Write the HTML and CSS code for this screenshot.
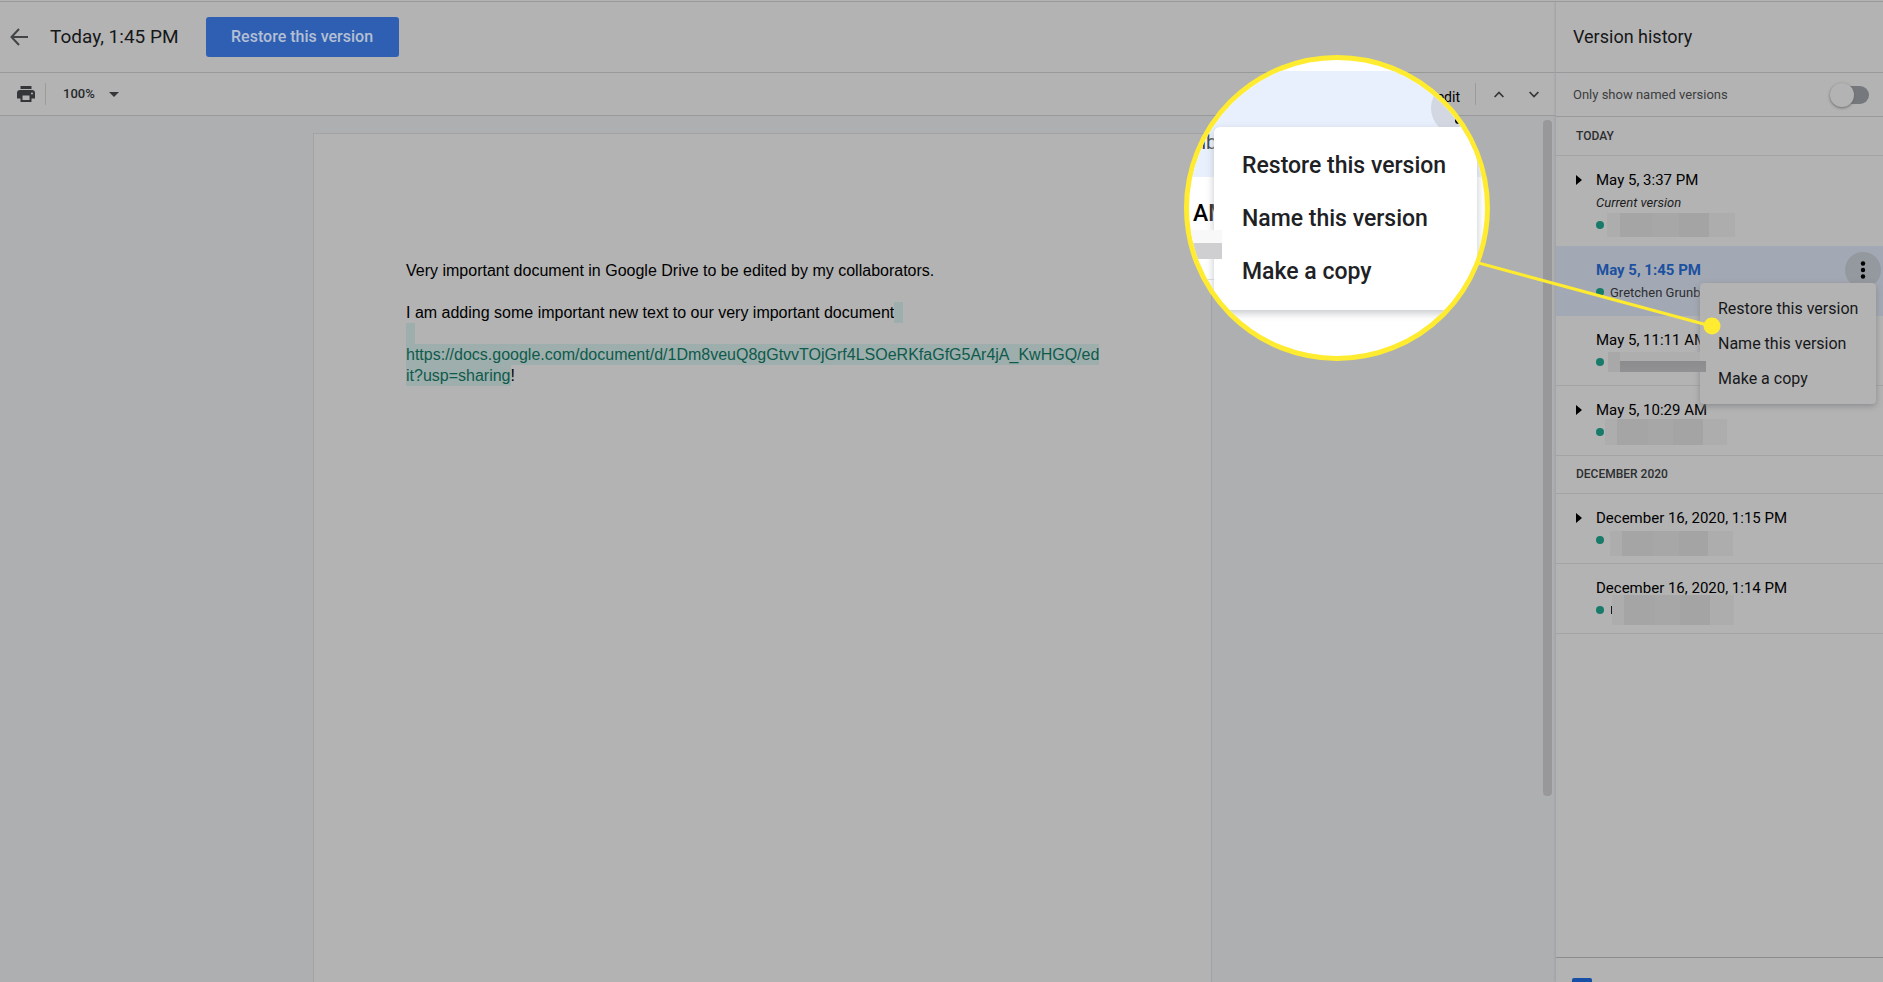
FILE: index.html
```html
<!DOCTYPE html>
<html lang="en">
<head>
<meta charset="utf-8">
<title>Version history</title>
<link rel="stylesheet" href="styles.css">
</head>
<body>
<div class="app">
  <main class="editor">
    <header class="topbar">
      <button class="icon-button back" aria-label="Back">
        <svg width="18" height="18" viewBox="0 0 18 18" fill="none" stroke="currentColor" stroke-width="2"><path d="M18 9H2M9 1L1.500 9L9 17"/></svg>
      </button>
      <h1 class="title">Today, 1:45 PM</h1>
      <button class="restore">Restore this version</button>
    </header>
    <div class="toolbar">
      <button class="icon-button print" aria-label="Print">
        <svg width="18" height="16" viewBox="0 0 18 16"><path fill="currentColor" fill-rule="evenodd" d="M3.500 0h11v3h-11zM3 4h12a3 3 0 0 1 3 3v5.500h-3.500V16h-11v-3.500H0V7a3 3 0 0 1 3-3zM5.500 9.500V14h7V9.500zM15 6.500a1 1 0 1 0 0 2a1 1 0 0 0 0-2z"/></svg>
      </button>
      <label class="zoom">
        <select aria-label="Zoom"><option>100%</option></select>
        <svg width="10" height="5" viewBox="0 0 10 5"><path fill="currentColor" d="M0 0h10L5 5z"/></svg>
      </label>
      <span class="edits">Total: 1 edit</span>
      <div class="steps">
        <button class="icon-button" aria-label="Previous edit"><svg width="10" height="7" viewBox="0 0 10 7" fill="none" stroke="currentColor" stroke-width="1.700"><path d="M.6 6L5 1.500L9.400 6"/></svg></button>
        <button class="icon-button" aria-label="Next edit"><svg width="10" height="7" viewBox="0 0 10 7" fill="none" stroke="currentColor" stroke-width="1.700"><path d="M.6 1L5 5.500L9.400 1"/></svg></button>
      </div>
    </div>
    <div class="canvas">
      <article class="paper">
        <p>Very important document in Google Drive to be edited by my collaborators.</p>
        <p>I am adding some important new text to our very important document<span class="added">&nbsp;&nbsp;</span><br><span class="added">&nbsp;&nbsp;</span><br><a class="added" href="#doc">https://docs.google.com/document/d/1Dm8veuQ8gGtvvTOjGrf4LSOeRKfaGfG5Ar4jA_KwHGQ/ed<br>it?usp=sharing</a>!</p>
      </article>
      <div class="scrollbar"></div>
    </div>
  </main>

  <aside class="history">
    <h2 class="history-title">Version history</h2>
    <div class="filter">
      <label for="named">Only show named versions</label>
      <input class="switch" id="named" type="checkbox">
    </div>
    <h3 class="group">TODAY</h3>
    <section class="version first">
      <button class="expand" aria-label="Expand"></button>
      <div class="date">May 5, 3:37 PM</div>
      <div class="current">Current version</div>
      <div class="author"><i class="dot"></i><span class="mask m1"></span></div>
    </section>
    <section class="version selected">
      <div class="date">May 5, 1:45 PM</div>
      <div class="author"><i class="dot"></i><span class="name">Gretchen Grunberg</span></div>
      <button class="more" aria-label="More actions"><svg width="6" height="18" viewBox="0 0 6 18"><circle cx="3" cy="2.500" r="2.200"/><circle cx="3" cy="9" r="2.200"/><circle cx="3" cy="15.500" r="2.200"/></svg></button>
      <div class="menu">
        <button>Restore this version</button>
        <button>Name this version</button>
        <button>Make a copy</button>
      </div>
    </section>
    <section class="version">
      <div class="date">May 5, 11:11 AM</div>
      <div class="author"><i class="dot"></i><span class="mask m2"></span></div>
    </section>
    <section class="version">
      <button class="expand" aria-label="Expand"></button>
      <div class="date">May 5, 10:29 AM</div>
      <div class="author"><i class="dot"></i><span class="mask m3"></span></div>
    </section>
    <h3 class="group">DECEMBER 2020</h3>
    <section class="version">
      <button class="expand" aria-label="Expand"></button>
      <div class="date">December 16, 2020, 1:15 PM</div>
      <div class="author"><i class="dot"></i><span class="mask m4"></span></div>
    </section>
    <section class="version">
      <div class="date">December 16, 2020, 1:14 PM</div>
      <div class="author"><i class="dot"></i><i class="sliver"></i><span class="mask m5"></span></div>
    </section>
    <footer class="history-footer"><input class="changes" type="checkbox" checked aria-label="Show changes"></footer>
  </aside>

  <div class="callout">
    <svg class="pointer" width="250" height="80" viewBox="0 0 250 80"><path d="M0 5L240 70" stroke="#ffeb2f" stroke-width="3"/><circle cx="241" cy="70" r="8.500" fill="#ffeb2f"/></svg>
    <div class="lens">
      <div class="lens-row"></div>
      <div class="lens-more"><i></i></div>
      <span class="lens-name">nb</span>
      <span class="lens-date">AM</span>
      <div class="lens-line"></div>
      <div class="lens-menu">
        <button>Restore this version</button>
        <button>Name this version</button>
        <button>Make a copy</button>
      </div>
      <div class="lens-mask"></div>
    </div>
  </div>
</div>
</body>
</html>
```
FILE: styles.css
```css
* { box-sizing: border-box; }

body {
  margin: 0;
  padding-top: 1px;
  background: #b3b3b3;
  color: #000;
  font-family: Roboto, "Liberation Sans", sans-serif;
}

button {
  border: 0;
  padding: 0;
  background: none;
  color: inherit;
  font: inherit;
}

h1, h2, h3, p { margin: 0; font-weight: 400; }
svg { display: block; }

.app {
  position: relative;
  display: flex;
  height: calc(100vh - 1px);
  overflow: hidden;
  border-top: 1px solid #97999b;
}

/* Editor column */
.editor {
  flex: 1;
  min-width: 0;
  display: flex;
  flex-direction: column;
}

.topbar {
  display: flex;
  align-items: center;
  height: 71px;
  padding: 0 0 1px 10px;
  border-bottom: 1px solid #97999b;
}

.back { color: #424447; }

.title {
  margin: 0 27px 0 22px;
  font-size: 19px;
  line-height: 24px;
  color: #161719;
}

.restore {
  width: 193px;
  height: 40px;
  border-radius: 3px;
  background: #2f5fb2;
  color: #b3bfd4;
  font-size: 16px;
  font-weight: 500;
}

.toolbar {
  display: flex;
  align-items: center;
  height: 43px;
  padding: 0 17px;
  border-bottom: 1px solid #97999b;
}

.print {
  padding-right: 10px;
  border-right: 1px solid #999b9d;
  height: 22px;
  display: flex;
  align-items: center;
  color: #343639;
}

.zoom {
  display: flex;
  align-items: center;
  margin-left: 17px;
  color: #343639;
}

.zoom select {
  width: 46px;
  border: 0;
  padding: 0;
  appearance: none;
  background: none;
  color: #27292b;
  font: 500 13px/20px Roboto, sans-serif;
}

.edits {
  margin: 6px 15px 0 auto;
  font-size: 14px;
  line-height: 20px;
}

.steps {
  display: flex;
  align-items: center;
  gap: 25px;
  height: 22px;
  padding-left: 18px;
  border-left: 1px solid #999b9d;
  color: #343639;
}

.canvas {
  flex: 1;
  display: flex;
  justify-content: flex-end;
  min-height: 0;
  background: #adafb1;
}

.paper {
  flex: 1;
  max-width: 899px;
  margin: 17px 331px 0 0;
  padding: 126px 92px 0;
  border: 1px solid #a1a3a5;
  border-bottom: 0;
  background: #b3b3b3;
  font: 16px/21px "Liberation Sans", Arial, sans-serif;
}

.paper p + p { margin-top: 21px; }

.added {
  padding: 2px 0;
  background: #9daeac;
  color: #0f5a4b;
  text-decoration: none;
}

.scrollbar {
  width: 9px;
  height: 676px;
  margin: 4px 4px 0 0;
  border-radius: 4px;
  background: #98989b;
}

/* Version history panel */
.history {
  width: 327px;
  display: flex;
  flex-direction: column;
  background: #b3b3b3;
  box-shadow: -1px 0 2px #9fa0a2;
}

.history-title {
  height: 71px;
  padding: 22px 17px;
  border-bottom: 1px solid #97999b;
  font-size: 18px;
  line-height: 26px;
  color: #161719;
}

.filter {
  display: flex;
  align-items: center;
  justify-content: space-between;
  height: 44px;
  padding: 0 14px 0 17px;
  border-bottom: 1px solid #97999b;
  color: #3b3d3f;
  font-size: 13px;
}

.switch {
  appearance: none;
  display: flex;
  align-items: center;
  width: 32px;
  height: 18px;
  margin: 0;
  border-radius: 9px;
  background: #75787c;
}

.switch::before {
  content: "";
  width: 24px;
  height: 24px;
  flex: none;
  margin-left: -7px;
  border-radius: 50%;
  background: #b3b3b3;
  box-shadow: 0 1px 3px #6b6b6b;
}

.group {
  height: 39px;
  padding: 0 20px;
  border-bottom: 1px solid #a2a3a4;
  color: #2c2e30;
  font-size: 12px;
  font-weight: 500;
  line-height: 38px;
}

.version + .group {
  height: 38px;
  line-height: 36px;
}

.version {
  position: relative;
  height: 70px;
  padding: 14px 0 0 40px;
  border-bottom: 1px solid #a2a3a4;
}

.version.first { height: 90px; border-bottom-color: #b3b3b3; }

.version.selected {
  background: #a3a9b4;
  border-color: #a3a9b4;
}

.date {
  font-size: 15px;
  line-height: 20px;
}

.selected .date { color: #1c50a0; font-weight: 700; }

.current {
  margin: 3px 0 0;
  color: #1b1c1d;
  font-size: 13px;
  font-style: italic;
  line-height: 20px;
}

.author {
  display: flex;
  align-items: center;
  height: 24px;
}

.dot {
  width: 8px;
  height: 8px;
  flex: none;
  border-radius: 50%;
  background: #187a68;
}

.name {
  margin-left: 6px;
  color: #2c2e30;
  font-size: 13px;
}

.mask {
  height: 24px;
  margin-left: 4px;
  background: linear-gradient(90deg, #adadad 10%, #a5a5a6 10% 35%, #a7a7a7 35% 56%, #a4a4a5 56% 80%, #adadae 80%);
}

.m1 { width: 128px; margin-left: 3px; }
.m2 {
  position: relative;
  z-index: 3;
  width: 98px;
  height: 20px;
  background:
    linear-gradient(#8c8c8e, #919193) 12px 9px / 86px 11px no-repeat,
    linear-gradient(#a8a8a8, #a8a8a8) 0 0 / 12px 20px no-repeat,
    linear-gradient(#aeaeae, #aeaeae) 12px 0 / 80px 9px no-repeat;
}
.m3 { width: 122px; height: 26px; margin-left: 1px; }
.m4 { width: 123px; height: 25px; margin: 6px 0 0 6px; }
.m5 { width: 122px; height: 30px; }

.sliver {
  width: 1px;
  height: 8px;
  margin: 0 -4px 0 7px;
  background: #17181a;
}

.expand {
  position: absolute;
  left: 20px;
  top: 19px;
  border: solid transparent;
  border-width: 5px 0 5px 6px;
  border-left-color: #000;
}

.more {
  position: absolute;
  top: 6px;
  right: 2px;
  display: grid;
  place-items: center;
  width: 36px;
  height: 36px;
  border-radius: 50%;
  background: #94989f;
}

.menu {
  position: absolute;
  z-index: 2;
  top: 37px;
  right: 7px;
  display: flex;
  flex-direction: column;
  width: 176px;
  padding: 8px 0;
  border-radius: 4px;
  background: #b3b3b3;
  box-shadow: 0 2px 6px #8a8b8d;
}

.menu button {
  height: 35px;
  padding-left: 18px;
  color: #17181a;
  font-size: 16px;
  text-align: left;
}

.history-footer {
  margin-top: auto;
  height: 25px;
  padding: 20px 16px 0;
  border-top: 1px solid #8c8d8f;
}

.changes {
  appearance: none;
  display: block;
  width: 20px;
  height: 20px;
  margin: 0;
  border-radius: 2px;
  background: #174ea6;
}

/* Magnified callout */
.pointer {
  position: absolute;
  z-index: 4;
  top: 254px;
  right: 162px;
}

.lens {
  position: absolute;
  z-index: 5;
  top: 53px;
  right: 393px;
  width: 306px;
  height: 306px;
  overflow: hidden;
  border: 5px solid #ffeb2f;
  border-radius: 50%;
  background: #fff;
  color: #202124;
}

.lens > * { position: absolute; }

.lens-row {
  top: 11px;
  left: 0;
  width: 100%;
  height: 106px;
  background: #e8f0fe;
}

.lens-more {
  top: 21px;
  left: 242px;
  width: 54px;
  height: 54px;
  border-radius: 50%;
  background: #d2d7e2;
}

.lens-more i {
  position: absolute;
  top: 36px;
  left: 24px;
  width: 7px;
  height: 7px;
  border-radius: 50%;
  background: #000;
}

.lens-name {
  top: 70px;
  left: 6px;
  color: #3c4043;
  font-size: 20px;
  line-height: 24px;
}

.lens-date {
  top: 140px;
  left: 4px;
  color: #000;
  font-size: 23px;
  font-weight: 500;
  line-height: 28px;
}

.lens-line {
  top: 219px;
  left: 0;
  width: 40px;
  height: 1px;
  background: #dadce0;
}

.lens-menu {
  top: 67px;
  left: 25px;
  display: flex;
  flex-direction: column;
  width: 263px;
  padding: 12px 0;
  border-radius: 6px;
  background: #fff;
  box-shadow: 0 3px 9px #c4c6ca;
}

.lens-menu button {
  height: 53px;
  padding-left: 28px;
  font-size: 23px;
  font-weight: 500;
  text-align: left;
}

.lens-mask {
  top: 170px;
  left: 0;
  width: 33px;
  height: 29px;
  background: linear-gradient(#f8f8f9 13px, #cfcfd1 13px);
}
```
